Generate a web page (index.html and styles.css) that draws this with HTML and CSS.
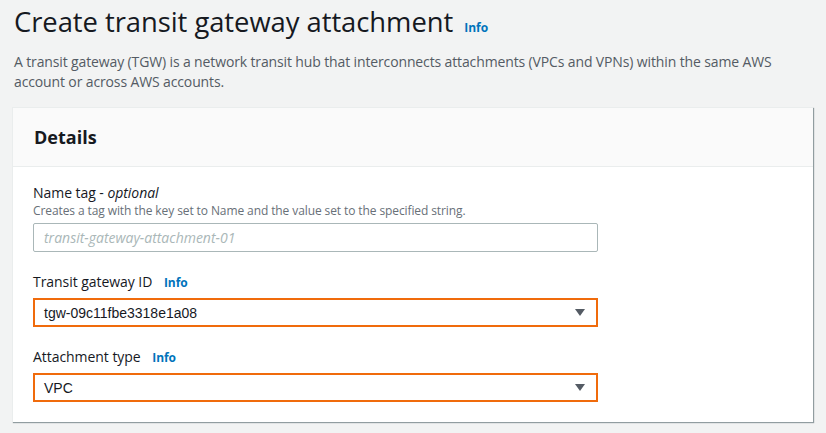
FILE: index.html
```html
<!DOCTYPE html>
<html>
<head>
<meta charset="utf-8">
<link rel="stylesheet" href="styles.css">
</head>
<body>
<div class="page">
  <div class="title-row">
    <h1 class="title">Create transit gateway attachment</h1>
    <a class="info">Info</a>
  </div>
  <p class="desc">A transit gateway (TGW) is a network transit hub that interconnects attachments (VPCs and VPNs) within the same AWS account or across AWS accounts.</p>
  <div class="panel">
    <div class="panel-header"><h2>Details</h2></div>
    <div class="panel-body">
      <div class="field">
        <div class="label">Name tag - <i>optional</i></div>
        <div class="hint">Creates a tag with the key set to Name and the value set to the specified string.</div>
        <div class="input"><span class="placeholder">transit-gateway-attachment-01</span></div>
      </div>
      <div class="field">
        <div class="label">Transit gateway ID <a class="info small">Info</a></div>
        <div class="select"><span class="value">tgw-09c11fbe3318e1a08</span><span class="caret"></span></div>
      </div>
      <div class="field">
        <div class="label">Attachment type <a class="info small">Info</a></div>
        <div class="select"><span class="value">VPC</span><span class="caret"></span></div>
      </div>
    </div>
  </div>
</div>
</body>
</html>
```

FILE: styles.css
```css
html, body {
  margin: 0;
  padding: 0;
  background: #f2f3f3;
}
body {
  font-family: "Open Sans", "Noto Sans", sans-serif;
  color: #16191f;
  width: 826px;
  height: 433px;
  overflow: hidden;
}
.page {
  padding: 4px 13px 0 12px;
}
.title-row {
  display: flex;
  align-items: baseline;
  padding-left: 2px;
}
.title {
  margin: 0;
  font-size: 27.4px;
  font-weight: 400;
  line-height: 36px;
  letter-spacing: -0.05px;
}
.info {
  color: #0073bb;
  font-weight: 700;
  font-size: 12px;
  margin-left: 11px;
}
.info.small {
  margin-left: 8px;
}
.desc {
  margin: 12px 0 0 2px;
  font-size: 14px;
  line-height: 20px;
  color: #545b64;
  letter-spacing: -0.13px;
}
.panel {
  margin-top: 15px;
  background: #fff;
  border-top: 1px solid #eaeded;
  border-left: 1px solid #eaeded;
  box-shadow: 1px 1px 1px 0 rgba(0, 28, 36, 0.4);
  width: 800px;
}
.panel-header {
  background: #fafafa;
  border-bottom: 1px solid #eaeded;
  height: 58px;
  display: flex;
  align-items: center;
  padding-left: 21px;
}
.panel-header h2 {
  margin: 0;
  font-size: 18px;
  font-weight: 700;
}
.panel-body {
  padding: 16px 20px 20px 20px;
}
.field + .field {
  margin-top: 20px;
}
.label {
  font-size: 14px;
  line-height: 20px;
  letter-spacing: -0.05px;
}
.hint {
  font-size: 12px;
  line-height: 16px;
  color: #687078;
  letter-spacing: -0.1px;
}
.input {
  margin-top: 4px;
  width: 553px;
  height: 27px;
  border: 1px solid #aab7b8;
  border-radius: 2px;
  display: flex;
  align-items: center;
  padding-left: 10px;
}
.placeholder {
  font-style: italic;
  color: #aab7b8;
  font-size: 14px;
}
.select {
  margin-top: 5px;
  width: 552px;
  height: 25px;
  border: 2px solid #f06b0c;
  display: flex;
  align-items: center;
  padding-left: 9px;
}
.value {
  font-family: "Liberation Sans", Arial, sans-serif;
  font-size: 14px;
  color: #16191f;
  flex: 1;
}
.caret {
  width: 0;
  height: 0;
  border-left: 5px solid transparent;
  border-right: 5px solid transparent;
  border-top: 7px solid #545b64;
  margin-right: 11px;
}
```
